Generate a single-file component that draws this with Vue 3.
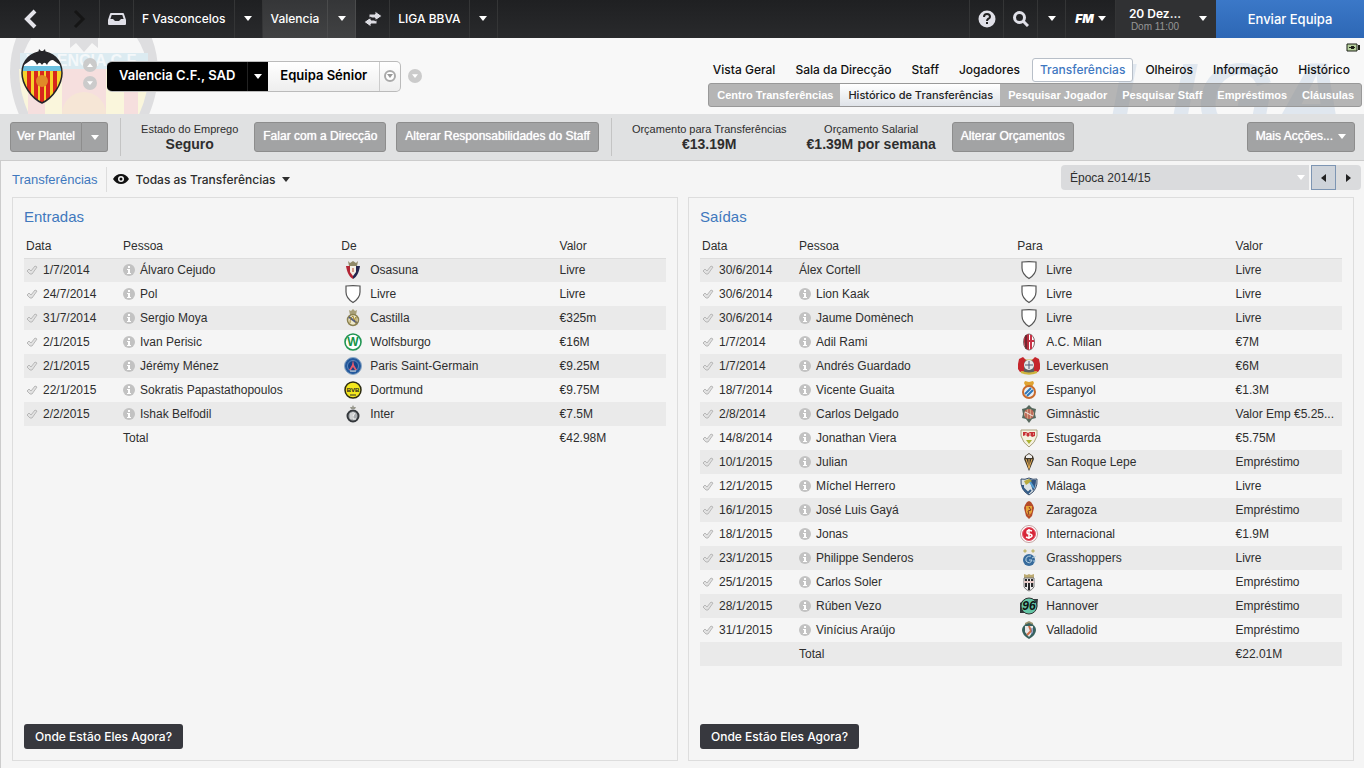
<script setup>
import { ref } from 'vue';

const sections = ref([
  'Vista Geral',
  'Sala da Direcção',
  'Staff',
  'Jogadores',
  'Transferências',
  'Olheiros',
  'Informação',
  'Histórico',
]);
const activeSection = ref('Transferências');

const pages = ref([
  'Centro Transferências',
  'Histórico de Transferências',
  'Pesquisar Jogador',
  'Pesquisar Staff',
  'Empréstimos',
  'Cláusulas',
]);
const activePage = ref('Histórico de Transferências');

const season = ref('Época 2014/15');

const panels = ref([
  {
    id: 'in',
    title: 'Entradas',
    clubLabel: 'De',
    total: '€42.98M',
    rows: [
      { date: '1/7/2014', name: 'Álvaro Cejudo', club: 'Osasuna', crest: 'osasuna', value: 'Livre' },
      { date: '24/7/2014', name: 'Pol', club: 'Livre', crest: 'free', value: 'Livre' },
      { date: '31/7/2014', name: 'Sergio Moya', club: 'Castilla', crest: 'castilla', value: '€325m' },
      { date: '2/1/2015', name: 'Ivan Perisic', club: 'Wolfsburgo', crest: 'wolfsburg', value: '€16M' },
      { date: '2/1/2015', name: 'Jérémy Ménez', club: 'Paris Saint-Germain', crest: 'psg', value: '€9.25M' },
      { date: '22/1/2015', name: 'Sokratis Papastathopoulos', club: 'Dortmund', crest: 'dortmund', value: '€9.75M' },
      { date: '2/2/2015', name: 'Ishak Belfodil', club: 'Inter', crest: 'inter', value: '€7.5M' },
    ],
  },
  {
    id: 'out',
    title: 'Saídas',
    clubLabel: 'Para',
    total: '€22.01M',
    rows: [
      { date: '30/6/2014', name: 'Álex Cortell', club: 'Livre', crest: 'free', value: 'Livre', noInfo: true },
      { date: '30/6/2014', name: 'Lion Kaak', club: 'Livre', crest: 'free', value: 'Livre' },
      { date: '30/6/2014', name: 'Jaume Domènech', club: 'Livre', crest: 'free', value: 'Livre' },
      { date: '1/7/2014', name: 'Adil Rami', club: 'A.C. Milan', crest: 'milan', value: '€7M' },
      { date: '1/7/2014', name: 'Andrés Guardado', club: 'Leverkusen', crest: 'leverkusen', value: '€6M' },
      { date: '18/7/2014', name: 'Vicente Guaita', club: 'Espanyol', crest: 'espanyol', value: '€1.3M' },
      { date: '2/8/2014', name: 'Carlos Delgado', club: 'Gimnàstic', crest: 'gimnastic', value: 'Valor Emp €5.25...' },
      { date: '14/8/2014', name: 'Jonathan Viera', club: 'Estugarda', crest: 'stuttgart', value: '€5.75M' },
      { date: '10/1/2015', name: 'Julian', club: 'San Roque Lepe', crest: 'sanroque', value: 'Empréstimo' },
      { date: '12/1/2015', name: 'Míchel Herrero', club: 'Málaga', crest: 'malaga', value: 'Livre' },
      { date: '16/1/2015', name: 'José Luis Gayá', club: 'Zaragoza', crest: 'zaragoza', value: 'Empréstimo' },
      { date: '18/1/2015', name: 'Jonas', club: 'Internacional', crest: 'internacional', value: '€1.9M' },
      { date: '23/1/2015', name: 'Philippe Senderos', club: 'Grasshoppers', crest: 'grasshoppers', value: 'Livre' },
      { date: '25/1/2015', name: 'Carlos Soler', club: 'Cartagena', crest: 'cartagena', value: 'Empréstimo' },
      { date: '28/1/2015', name: 'Rúben Vezo', club: 'Hannover', crest: 'hannover', value: 'Empréstimo' },
      { date: '31/1/2015', name: 'Vinícius Araújo', club: 'Valladolid', crest: 'valladolid', value: 'Empréstimo' },
    ],
  },
]);
</script>

<template>
  <div class="page">
    <svg class="symbols" aria-hidden="true">
      <symbol id="valencia" viewBox="0 0 42 56">
        <clipPath id="valencia-shape">
          <path d="M21 4C31 4 41 12 41 25C41 36 32 50 21 55C10 50 1 36 1 25C1 12 11 4 21 4z" />
        </clipPath>
        <g clip-path="url(#valencia-shape)">
          <rect width="42" height="56" fill="#f6d22c" />
          <path d="M6 22h4v34H6zM13 22h4v34h-4zM25 22h4v34h-4zM32 22h4v34h-4zM19 22h4v34h-4z" fill="#d8261c" />
          <rect width="42" height="22" fill="#fff" />
          <rect y="18" width="42" height="5" fill="#6cc0e0" />
          <circle cx="21" cy="33" r="6" fill="#e08a28" />
          <path d="M0 0h42v18C38 17 35 14 32 12C29 12 27 14 26 17C24 14 23 14 21 17C19 14 18 14 16 17C15 14 13 12 10 12C7 14 4 17 0 18z" fill="#26262a" />
        </g>
        <path d="M17 6L18 1l2 2h2l2-2l1 5z" fill="#26262a" />
        <path d="M21 4C31 4 41 12 41 25C41 36 32 50 21 55C10 50 1 36 1 25C1 12 11 4 21 4z" fill="none" stroke="#26262a" stroke-width="1.500" />
      </symbol>
      <symbol id="valencia-faded" viewBox="0 0 148 198">
        <clipPath id="faded-shape">
          <path d="M74 0C114 0 148 36 148 84C148 126 120 172 74 198C28 172 0 126 0 84C0 36 34 0 74 0z" />
        </clipPath>
        <g clip-path="url(#faded-shape)">
          <rect width="148" height="198" fill="#dedee0" />
          <path d="M10 80Q16 45 40 34h68q24 11 30 46v5H10z" fill="#f7f7f7" />
          <path d="M60 30h28v30l-6-5-8 9-8-9-6 5z" fill="#dedee0" />
          <path d="M10 65h128v16H10z" fill="#dcebf1" />
          <path d="M9 81h130q0 60-65 110Q9 141 9 81z" fill="#faf6dc" />
          <path d="M18 81h17v90H18zM52 81h44v110H52zM114 81h14v90h-14z" fill="#f6dfde" />
          <circle cx="74" cy="126" r="22" fill="#f6e6d6" />
        </g>
      </symbol>
      <symbol id="caret" viewBox="0 0 8 5"><path d="M0 0h8L4 5z" fill="currentColor" /></symbol>
      <symbol id="tick" viewBox="0 0 12 12">
        <path d="M1 7L3 5L5 7L9 2L11 3L6 10L4 10z" fill="#e2e2e2" stroke="#b8b8b8" stroke-linejoin="round" />
      </symbol>
      <symbol id="info" viewBox="0 0 12 12">
        <circle cx="6" cy="6" r="6" fill="#c2c2c2" />
        <path d="M5 2h2v2H5zM4 5h3v4h1v1H4V9h1V6H4z" fill="#fff" />
      </symbol>

      <symbol id="crest-free" viewBox="0 0 24 20">
        <path d="M5 2C9 1.500 15 1.500 19 2V8C19 12 16 16 12 18.500C8 16 5 12 5 8z" fill="#fff" stroke="#555" stroke-width="1.200" />
      </symbol>
      <symbol id="crest-osasuna" viewBox="0 0 24 20">
        <path d="M7 1l2 2 3-2 3 2 2-2-1 5H8z" fill="#8f8867" />
        <path d="M5 6h7v13C8 17 6 12 5 6z" fill="#b32535" />
        <path d="M12 6h7c-1 6-3 11-7 13z" fill="#25264f" />
        <path d="M9 6h6v6l-3 4-3-4z" fill="#f4f0e6" />
        <path d="M12 8v4" stroke="#d79a8a" stroke-width="2" />
      </symbol>
      <symbol id="crest-castilla" viewBox="0 0 24 20">
        <path d="M8 2l2 1 2-2 2 2 2-1-1 5H9z" fill="#a8a078" />
        <circle cx="12" cy="12" r="5.500" fill="#eee8c8" stroke="#8b8150" stroke-width="1.500" />
        <path d="M8 9l8 6" stroke="#535c82" stroke-width="2" />
        <path d="M9 15c0-4 1-6 3-7l1 4 2-3v7" fill="none" stroke="#a28a35" />
      </symbol>
      <symbol id="crest-wolfsburg" viewBox="0 0 24 20">
        <circle cx="12" cy="10" r="8" fill="#fff" stroke="#229653" stroke-width="1.600" />
        <text x="12" y="14" text-anchor="middle" class="crest-letter">W</text>
      </symbol>
      <symbol id="crest-psg" viewBox="0 0 24 20">
        <circle cx="12" cy="10" r="8.500" fill="#24599c" stroke="#8ba8c6" />
        <circle cx="12" cy="10" r="5.500" fill="#164489" stroke="#5b87bd" />
        <path d="M12 4l1 5 3 5h-2l-2-3-2 3H8l3-5z" fill="#e45b6c" />
        <path d="M9 15h6" stroke="#ddd" />
      </symbol>
      <symbol id="crest-dortmund" viewBox="0 0 24 20">
        <circle cx="12" cy="10" r="8" fill="#f3e71d" stroke="#2b2a10" stroke-width="1.500" />
        <text x="12" y="12" text-anchor="middle" class="crest-text">BVB</text>
        <path d="M10 14v2M12 14v2M14 14v2" stroke="#333" />
      </symbol>
      <symbol id="crest-inter" viewBox="0 0 24 20">
        <path d="M12 1l1 2h2l-1 2h-4L9 3h2z" fill="#99998e" />
        <circle cx="12" cy="12" r="5.500" fill="#a9adb0" stroke="#34383c" stroke-width="2" />
        <path d="M10 9v6M12 8v7h3M14 9l-2 3" fill="none" stroke="#f5f5f5" />
      </symbol>
      <symbol id="crest-milan" viewBox="0 0 24 20">
        <ellipse cx="12" cy="10" rx="5.500" ry="8" fill="#fff" stroke="#83666a" />
        <path d="M7 7q0-4 5-5v16q-5-1-5-8z" fill="#b82c3d" />
        <path d="M9 3v14" stroke="#2b2225" />
        <path d="M14 3v14M12 9h5" stroke="#c93346" stroke-width="2" />
      </symbol>
      <symbol id="crest-leverkusen" viewBox="0 0 24 20">
        <path d="M6 4h12v12q-6 4-12 0z" fill="#5c5d60" stroke="#c9b246" />
        <path d="M1 8l1-5 4-2 3 3-2 3v8l-4 1-2-3zM23 8l-1-5-4-2-3 3 2 3v8l4 1 2-3z" fill="#c5262c" />
        <circle cx="12" cy="9" r="5" fill="#e7e7e7" />
        <path d="M12 5v8M8 9h8" stroke="#4b5b73" />
        <path d="M4 16q8 3 16 0" fill="none" stroke="#cdb33d" stroke-width="2" />
      </symbol>
      <symbol id="crest-espanyol" viewBox="0 0 24 20">
        <path d="M8 1l4 1 4-1 1 2-2 4H9L7 3z" fill="#dfa331" />
        <circle cx="12" cy="12" r="6" fill="#e9eef2" stroke="#c86a2b" stroke-width="2" />
        <path d="M8 14l6-6M10 16l6-6" stroke="#2e78bb" stroke-width="2" />
      </symbol>
      <symbol id="crest-gimnastic" viewBox="0 0 24 20">
        <path d="M12 1l3 3 4 1-1 5 1 4-4 1-3 4-3-4-4-1 1-4-1-5 4-1z" fill="#56685d" />
        <circle cx="12" cy="10" r="5" fill="#d9a183" />
        <path d="M9 6v8M12 5v10M15 6v8" stroke="#a23832" />
        <path d="M8 8l8 4" stroke="#eee" />
      </symbol>
      <symbol id="crest-stuttgart" viewBox="0 0 24 20">
        <path d="M4 2h16v6q-2 7-8 11Q6 15 4 8z" fill="#f4f1df" stroke="#aaa17f" />
        <path d="M6 4h3l2 1 2-1h5v4l-3 1-2-2-2 2-2-2-3 1z" fill="#c72f35" />
        <path d="M8 6h2M12 6h2M16 6h1" stroke="#f4f1df" />
        <path d="M9 12h6l-3 4z" fill="#acb431" />
      </symbol>
      <symbol id="crest-sanroque" viewBox="0 0 24 20">
        <path d="M8 4l4-3 4 3 1 3-5 12L7 7z" fill="#423829" />
        <path d="M9 4l3-2 3 2v2H9z" fill="#eee" />
        <path d="M9 7l3 9M12 7v10M15 7l-3 9" stroke="#dfaa56" />
      </symbol>
      <symbol id="crest-malaga" viewBox="0 0 24 20">
        <path d="M4 3q4 1 8-1 4 2 8 1 1 11-8 16Q3 14 4 3z" fill="#dce3e5" stroke="#344b69" />
        <path d="M12 3q4 1 7 1 0 7-3 11z" fill="#315481" />
        <path d="M7 5l5-2 3 2-6 4z" fill="#b8aa3d" />
        <path d="M13 6l4 6" stroke="#55a0d3" stroke-width="2" />
        <path d="M6 9v3l5 5 3-3" fill="none" stroke="#335b87" stroke-width="2" />
      </symbol>
      <symbol id="crest-zaragoza" viewBox="0 0 24 20">
        <path d="M8 5l2-3 2-1 2 1 2 3 1 3-2 8-3 3-3-3-2-8z" fill="#b54b29" />
        <path d="M9 6h6v6l-3 4-3-4z" fill="#e5a337" />
        <path d="M12 7l2 3-3 1 1 4" fill="none" stroke="#82382c" />
      </symbol>
      <symbol id="crest-internacional" viewBox="0 0 24 20">
        <circle cx="12" cy="10" r="8.500" fill="#fff" stroke="#c6a1a1" />
        <circle cx="12" cy="10" r="6.500" fill="#d72738" stroke="#e6566a" />
        <path d="M15 7q-5-2-5 1q0 2 2 2q3 0 3 2q-2 3-6 1M12 5v10" fill="none" stroke="#fff" stroke-width="1.500" />
      </symbol>
      <symbol id="crest-grasshoppers" viewBox="0 0 24 20">
        <path d="M8 1l2 2-2 2-2-2zM16 1l2 2-2 2-2-2z" fill="#c3ba75" />
        <circle cx="12" cy="12" r="6" fill="#376b9c" />
        <path d="M14 8q-6 0-5 5q4 4 6-1h-3M15 10l4-2M16 13h3" fill="none" stroke="#b7d2e3" />
      </symbol>
      <symbol id="crest-cartagena" viewBox="0 0 24 20">
        <path d="M7 2l3 1 2-1 2 1 3-1v4H7z" fill="#bcaa72" />
        <path d="M7 6h10v9q-2 3-5 4-3-1-5-4z" fill="#eee" stroke="#777" />
        <path d="M9 7v8M12 7v11M15 7v8" stroke="#2a2a2d" stroke-width="2" />
        <path d="M7 10h10" stroke="#e8cbc8" stroke-width="2" />
      </symbol>
      <symbol id="crest-hannover" viewBox="0 0 24 20">
        <path d="M3 7l5-4h13l-1 9-4 5H3z" fill="#31383a" />
        <circle cx="12" cy="10" r="8" fill="#64c6a6" stroke="#333" />
        <text x="12" y="14" text-anchor="middle" class="crest-number">96</text>
      </symbol>
      <symbol id="crest-valladolid" viewBox="0 0 24 20">
        <path d="M8 3l4-2 4 2v2H8z" fill="#9d9470" />
        <path d="M12 3q7 2 7 7t-7 9q-7-4-7-9t7-7z" fill="#37615e" />
        <path d="M8 6h8v6l-4 5-4-5z" fill="#e7e7e7" />
        <path d="M12 6l2 5-4 4" fill="none" stroke="#ce6d46" stroke-width="2" />
        <path d="M15 8v6" stroke="#4e6da7" />
      </symbol>
    </svg>

    <header class="topbar">
      <button class="cell back" aria-label="Anterior">
        <svg width="14" height="20" viewBox="0 0 14 20"><path d="M12 2L4 10l8 8" fill="none" stroke="#e4e4ea" stroke-width="4" /></svg>
      </button>
      <button class="cell forward" aria-label="Seguinte">
        <svg width="14" height="20" viewBox="0 0 14 20"><path d="M2 2l8 8-8 8" fill="none" stroke="#151515" stroke-width="3" /></svg>
      </button>
      <button class="cell inbox" aria-label="Caixa de entrada">
        <svg width="18" height="12" viewBox="0 0 18 12">
          <path d="M3 1h12l2 6v4H1V7z" fill="none" stroke="#e0e0e8" stroke-width="2" stroke-linejoin="round" />
          <path d="M1 6h4l2 2h4l2-2h4v5H1z" fill="#e0e0e8" />
        </svg>
      </button>
      <button class="cell label">F Vasconcelos</button>
      <button class="cell arrow" aria-label="Menu do treinador"><svg class="caret"><use href="#caret" /></svg></button>
      <button class="cell label current">Valencia</button>
      <button class="cell arrow current" aria-label="Menu do clube"><svg class="caret"><use href="#caret" /></svg></button>
      <button class="cell inbox" aria-label="Trocar">
        <svg width="18" height="16" viewBox="0 0 18 16">
          <path d="M5 3h6V0l7 5-7 5V7H5zM13 13H7v3L0 11l7-5v3h6z" fill="#dcdce2" stroke="#242527" stroke-width="1" />
        </svg>
      </button>
      <button class="cell label">LIGA BBVA</button>
      <button class="cell arrow" aria-label="Menu da liga"><svg class="caret"><use href="#caret" /></svg></button>

      <div class="topbar-space"></div>

      <button class="cell inbox" aria-label="Ajuda">
        <svg width="18" height="18" viewBox="0 0 18 18">
          <circle cx="9" cy="9" r="8.500" fill="#e0e0e8" />
          <path d="M6 7q0-3 3-3t3 3q0 1-2 2-1 1-1 2" fill="none" stroke="#222" stroke-width="2" />
          <path d="M8 12h2v2H8z" fill="#222" />
        </svg>
      </button>
      <button class="cell inbox" aria-label="Procurar">
        <svg width="16" height="16" viewBox="0 0 16 16">
          <circle cx="6.500" cy="6.500" r="5" fill="none" stroke="#e0e0e8" stroke-width="3" />
          <path d="M10 10l5 5" stroke="#e0e0e8" stroke-width="3" />
        </svg>
      </button>
      <button class="cell arrow" aria-label="Opções de procura"><svg class="caret"><use href="#caret" /></svg></button>
      <button class="cell fm">FM <svg class="caret"><use href="#caret" /></svg></button>
      <button class="cell date">
        <span>
          <strong>20 Dez...</strong>
          <small>Dom 11:00</small>
        </span>
        <svg class="caret"><use href="#caret" /></svg>
      </button>
      <button class="continue">Enviar Equipa</button>
    </header>

    <section class="club-header">
      <div class="backdrop" aria-hidden="true">
        <svg class="backdrop-crest"><use href="#valencia-faded" /></svg>
        <span class="backdrop-name">VALENCIA C.F.</span>
        <span class="backdrop-league">LIGA</span>
      </div>

      <div class="club">
        <svg class="club-crest" role="img" aria-label="Valencia C.F."><use href="#valencia" /></svg>
        <div class="steppers">
          <button class="round" aria-label="Clube anterior"><svg class="caret small flip"><use href="#caret" /></svg></button>
          <button class="round" aria-label="Clube seguinte"><svg class="caret small"><use href="#caret" /></svg></button>
        </div>
        <div class="club-picker">
          <button class="club-name">Valencia C.F., SAD</button>
          <button class="club-arrow" aria-label="Escolher clube"><svg class="caret"><use href="#caret" /></svg></button>
          <button class="team-name">Equipa Sénior</button>
          <button class="team-arrow" aria-label="Escolher equipa">
            <svg width="12" height="12" viewBox="0 0 12 12"><circle cx="6" cy="6" r="5" fill="#fff" stroke="#aaa" stroke-width="2" /><path d="M3 4h6L6 8z" fill="#999" /></svg>
          </button>
        </div>
        <button class="round" aria-label="Mais"><svg class="caret small"><use href="#caret" /></svg></button>
      </div>

      <div class="navigation">
        <svg class="battery" width="14" height="9" viewBox="0 0 14 9">
          <path d="M1 1h10v7H1z" fill="#b9d3a0" stroke="#1c2016" />
          <path d="M12 2h2v5h-2zM3 4h2V3h3v1h1v1H8v1H5V5H3z" fill="#1c2016" />
        </svg>
        <nav class="sections">
          <a v-for="item in sections" :key="item" href="#" :class="{ active: item === activeSection }" @click.prevent="activeSection = item">{{ item }}</a>
        </nav>
        <nav class="pages">
          <a v-for="item in pages" :key="item" href="#" :class="{ active: item === activePage }" @click.prevent="activePage = item">{{ item }}</a>
        </nav>
      </div>
    </section>

    <section class="toolbar">
      <div class="split">
        <button class="action">Ver Plantel</button>
        <button class="action" aria-label="Opções do plantel"><svg class="caret"><use href="#caret" /></svg></button>
      </div>
      <div class="divider"></div>
      <div class="fact job">
        <span>Estado do Emprego</span>
        <strong>Seguro</strong>
      </div>
      <button class="action">Falar com a Direcção</button>
      <button class="action staff">Alterar Responsabilidades do Staff</button>
      <div class="divider"></div>
      <div class="fact budget">
        <span>Orçamento para Transferências</span>
        <strong>€13.19M</strong>
      </div>
      <div class="fact wages">
        <span>Orçamento Salarial</span>
        <strong>€1.39M por semana</strong>
      </div>
      <button class="action">Alterar Orçamentos</button>
      <button class="action more">Mais Acções... <svg class="caret"><use href="#caret" /></svg></button>
    </section>

    <main class="content">
      <div class="filters">
        <h1>Transferências</h1>
        <button class="view">
          <svg width="16" height="12" viewBox="0 0 16 12">
            <path d="M0 6Q3 1 8 1t8 5q-3 5-8 5T0 6z" fill="#111" />
            <circle cx="8" cy="6" r="3" fill="#f5f5f5" />
            <circle cx="8" cy="6" r="1.500" fill="#111" />
          </svg>
          Todas as Transferências
          <svg class="caret"><use href="#caret" /></svg>
        </button>
        <div class="season-bar">
          <div class="season">
            <select v-model="season" aria-label="Época">
              <option>Época 2014/15</option>
            </select>
            <svg class="caret season-caret"><use href="#caret" /></svg>
          </div>
          <button class="step focused" aria-label="Época anterior"><svg width="5" height="8" viewBox="0 0 5 8"><path d="M5 0v8L0 4z" fill="#222" /></svg></button>
          <button class="step" aria-label="Época seguinte"><svg width="5" height="8" viewBox="0 0 5 8"><path d="M0 0v8l5-4z" fill="#222" /></svg></button>
        </div>
      </div>

      <div class="panels">
        <section v-for="panel in panels" :key="panel.id" class="panel">
          <h2>{{ panel.title }}</h2>
          <table>
            <thead>
              <tr>
                <th class="col-date">Data</th>
                <th class="col-person">Pessoa</th>
                <th class="col-club">{{ panel.clubLabel }}</th>
                <th>Valor</th>
              </tr>
            </thead>
            <tbody>
              <tr v-for="row in panel.rows" :key="row.name">
                <td><div class="entry"><svg class="icon"><use href="#tick" /></svg>{{ row.date }}</div></td>
                <td><div class="entry"><svg v-if="!row.noInfo" class="icon"><use href="#info" /></svg>{{ row.name }}</div></td>
                <td><div class="entry"><svg class="crest"><use :href="'#crest-' + row.crest" /></svg>{{ row.club }}</div></td>
                <td>{{ row.value }}</td>
              </tr>
              <tr>
                <td></td>
                <td>Total</td>
                <td></td>
                <td>{{ panel.total }}</td>
              </tr>
            </tbody>
          </table>
          <button class="where">Onde Estão Eles Agora?</button>
        </section>
      </div>
    </main>
  </div>
</template>

<style>
body {
  margin: 0;
  background: #f5f5f5;
}
</style>

<style scoped>
.page {
  min-height: 100vh;
  display: flex;
  flex-direction: column;
  font-family: "Liberation Sans", Arial, sans-serif;
  font-size: 12px;
  color: #2e2e2e;
}

* {
  box-sizing: border-box;
}

button, select {
  margin: 0;
  padding: 0;
  border: 0;
  background: none;
  color: inherit;
  font: inherit;
  white-space: nowrap;
}

a {
  text-decoration: none;
  white-space: nowrap;
}

svg {
  flex: none;
}

.symbols {
  position: absolute;
  width: 0;
  height: 0;
}

.caret {
  width: 8px;
  height: 5px;
}

.caret.small {
  width: 6px;
  height: 4px;
}

.flip {
  transform: rotate(180deg);
}

.crest-text {
  font: bold 6px "Liberation Sans", Arial, sans-serif;
  fill: #222;
}

.crest-letter {
  font: bold 12px "Liberation Sans", Arial, sans-serif;
  fill: #169447;
}

.crest-number {
  font: italic bold 12px "Liberation Sans", Arial, sans-serif;
  fill: #111;
}

.topbar {
  display: flex;
  height: 38px;
  background: linear-gradient(#1f2022, #292a2c);
  color: #fff;
  font: 500 12px Inter, Arial, sans-serif;
}

.cell {
  display: flex;
  align-items: center;
  justify-content: center;
  padding-bottom: 1px;
  border-right: 1px solid #343536;
}

.back {
  width: 60px;
}

.forward {
  width: 40px;
}

.inbox {
  width: 34px;
}

.label {
  padding: 0 8px 1px;
}

.arrow {
  width: 28px;
}

.current {
  background: linear-gradient(#353638, #414243);
  border-color: #4a4b4c;
}

.topbar-space {
  flex: 1;
  border-right: 1px solid #343536;
}

.fm {
  width: 50px;
  gap: 4px;
  font-style: italic;
  font-weight: 900;
}

.date {
  width: 100px;
  gap: 18px;
  padding-left: 4px;
  background: #303133;
  border: 0;
  text-align: center;
}

.date strong, .date small {
  display: block;
}

.date strong {
  font-weight: 600;
}

.date small {
  color: #969696;
  font: 10px "Liberation Sans", Arial, sans-serif;
}

.continue {
  width: 148px;
  padding-bottom: 1px;
  background: linear-gradient(#3b78c8, #2d67b5);
  font-size: 13px;
}

.club-header {
  position: relative;
  display: flex;
  justify-content: space-between;
  height: 76px;
  background: #f8f8f8;
}

.backdrop {
  position: absolute;
  inset: 0;
  overflow: hidden;
}

.backdrop-crest {
  position: absolute;
  left: 10px;
  top: -50px;
  width: 148px;
  height: 198px;
}

.backdrop-name {
  position: absolute;
  left: 26px;
  top: 14px;
  color: #f4f8fa;
  font-size: 16px;
  line-height: 18px;
  font-weight: bold;
}

.backdrop-league {
  position: absolute;
  right: 18px;
  top: 0;
  color: #e0e7ef;
  font-size: 100px;
  line-height: 120px;
  font-style: italic;
  font-weight: bold;
}

.club {
  position: relative;
  display: flex;
  align-items: center;
  padding-left: 21px;
}

.club-crest {
  width: 42px;
  height: 56px;
}

.steppers {
  display: flex;
  flex-direction: column;
  gap: 4px;
  margin: 0 10px 4px 20px;
}

.round {
  display: flex;
  align-items: center;
  justify-content: center;
  width: 14px;
  height: 14px;
  border-radius: 50%;
  background: #cbcbcb;
  color: #fff;
}

.club-picker {
  display: flex;
  height: 31px;
  margin-right: 7px;
  border: 1px solid #bbb;
  border-left: 0;
  border-radius: 5px;
  overflow: hidden;
  background: linear-gradient(#fff, #eee);
  color: #000;
  font: 600 13px Inter, Arial, sans-serif;
}

.club-name, .club-arrow {
  background: #000;
  color: #fff;
}

.club-name, .team-name {
  padding: 0 12px 2px;
}

.club-arrow, .team-arrow {
  display: flex;
  align-items: center;
  justify-content: center;
  width: 21px;
}

.club-arrow {
  border-left: 1px solid #222;
}

.team-arrow {
  border-left: 1px solid #ccc;
}

.navigation {
  position: relative;
  display: flex;
  flex-direction: column;
  align-items: flex-end;
  padding: 5px 2px 0 0;
}

.battery {
  margin-right: 2px;
}

.sections {
  display: flex;
  gap: 4px;
  margin: 6px 4px 1px 0;
}

.sections a {
  padding: 0 7px;
  border: 1px solid transparent;
  border-radius: 3px;
  color: #111;
  font: 500 12px/22px Inter, Arial, sans-serif;
}

.sections a.active {
  background: #fff;
  border-color: #b8bfc8;
  color: #3f78c1;
}

.pages {
  display: flex;
  border: 1px solid #999;
  border-radius: 3px;
  background: rgba(145, 145, 145, 0.65);
}

.pages a {
  padding: 0 7px 0 8px;
  color: #fff;
  font: bold 11px/22px "Liberation Sans", Arial, sans-serif;
}

.pages a.active {
  background: linear-gradient(#fff, #dfe3e8);
  color: #222;
  font: 500 11px/22px Inter, Arial, sans-serif;
}

.toolbar {
  display: flex;
  align-items: center;
  height: 47px;
  padding: 0 9px 0 10px;
  background: #e0e1e2;
  border-bottom: 1px solid #ccc;
}

.action {
  display: flex;
  align-items: center;
  justify-content: center;
  gap: 5px;
  height: 30px;
  padding: 0 8px 2px;
  border: 1px solid #8d8d8d;
  border-radius: 3px;
  background: #a2a3a4;
  color: #fff;
  text-shadow: 0 0 1px #fff;
}

.split {
  display: flex;
}

.split .action:first-child {
  padding: 0 6px 2px;
  border-radius: 3px 0 0 3px;
}

.split .action:last-child {
  width: 26px;
  padding-bottom: 0;
  border-left: 0;
  border-radius: 0 3px 3px 0;
}

.divider {
  width: 1px;
  height: 38px;
  margin: 0 12px;
  background: #c4c4c4;
}

.fact {
  padding: 0 8px;
  text-align: center;
  font-size: 11px;
  line-height: 15px;
  white-space: nowrap;
}

.fact span, .fact strong {
  display: block;
}

.fact strong {
  font-size: 14px;
}

.job, .wages {
  margin-right: 8px;
}

.staff {
  margin-left: 10px;
}

.budget {
  margin-right: 4px;
}

.more {
  margin-left: auto;
}

.content {
  flex: 1;
  display: flex;
  flex-direction: column;
  padding-bottom: 7px;
  border-left: 1px solid #ccc;
  background: #f5f5f5;
}

.filters {
  display: flex;
  align-items: center;
  height: 36px;
  padding: 0 3px 0 11px;
}

h1, h2 {
  margin: 0;
  color: #4078bd;
  font-weight: normal;
}

h1 {
  padding-right: 8px;
  border-right: 1px solid #ddd;
  font-size: 13px;
  line-height: 25px;
}

.view {
  display: flex;
  align-items: center;
  gap: 7px;
  margin-right: auto;
  padding-left: 6px;
  font: 500 12px Inter, Arial, sans-serif;
}

.season-bar {
  display: flex;
  align-self: flex-start;
  padding-top: 4px;
}

.season {
  display: flex;
  align-items: center;
  width: 248px;
  height: 25px;
  margin-right: 2px;
  padding-right: 4px;
  border-radius: 4px 0 0 4px;
  background: #dadbdd;
}

.season select {
  flex: 1;
  height: 25px;
  padding-left: 9px;
  appearance: none;
}

.season-caret {
  color: #fff;
}

.step {
  display: flex;
  align-items: center;
  justify-content: center;
  width: 25px;
  height: 25px;
  background: #dadbdd;
  border-radius: 0 4px 4px 0;
}

.step.focused {
  border: 1px solid #7d95b3;
  border-radius: 0;
  background: #ced3da;
}

.panels {
  flex: 1;
  display: flex;
  gap: 10px;
  padding: 0 10px 0 11px;
}

.panel {
  flex: 1;
  display: flex;
  flex-direction: column;
  min-width: 0;
  padding: 7px 11px 11px;
  border: 1px solid #ddd;
}

h2 {
  font-size: 15px;
  line-height: 24px;
}

table {
  width: 100%;
  margin-top: 5px;
  border-collapse: collapse;
  table-layout: fixed;
}

th, td {
  height: 24px;
  padding: 0 2px;
  text-align: left;
  white-space: nowrap;
}

th {
  font-weight: normal;
  border-bottom: 1px solid #ddd;
}

.col-date {
  width: 97px;
}

.col-person, .col-club {
  width: 34%;
}

tbody tr:nth-child(odd) {
  background: #eaeaea;
}

.entry {
  display: flex;
  align-items: center;
  gap: 5px;
}

.icon {
  width: 12px;
  height: 12px;
}

.crest {
  width: 24px;
  height: 20px;
}

.where {
  align-self: flex-start;
  height: 25px;
  margin-top: auto;
  padding: 0 11px 1px;
  border-radius: 3px;
  background: #37383e;
  color: #fff;
  font: 500 12px Inter, Arial, sans-serif;
}
</style>
